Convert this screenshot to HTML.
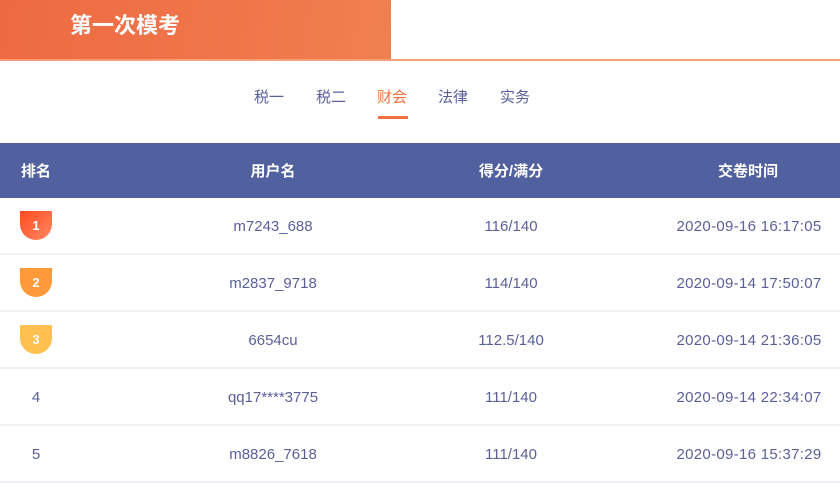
<!DOCTYPE html><html><head><meta charset="utf-8"><style>
*{margin:0;padding:0;box-sizing:border-box}
body{width:840px;height:482px;background:#fff;font-family:"Liberation Sans","Noto Sans CJK SC",sans-serif;position:relative;overflow:hidden}
.top{position:absolute;left:0;top:0;width:391px;height:60px;background:linear-gradient(100deg,#ee6a42,#f0764a 60%,#f08050)}
.line{position:absolute;left:0;top:59px;width:840px;height:2px;background:#f5a07a}
.title{position:absolute;left:70px;top:11px;color:#fff;font-size:22px;font-weight:bold;line-height:30px}
.tabs span{position:absolute;top:88px;font-size:15px;color:#5a5f9a;line-height:20px}
.ul{position:absolute;left:378px;top:116px;width:30px;height:3px;background:#f0703f}
.th{position:absolute;left:0;top:143px;width:840px;height:55px;background:#51609f;color:#fff;font-weight:bold;font-size:15px}
.c{position:absolute;text-align:center;transform:translateX(-50%);white-space:nowrap}
.row{position:absolute;left:0;width:840px;height:57px;border-bottom:2px solid #f1f1f3;color:#5a5f9a;font-size:15px}
.b{position:absolute;left:20px;top:13px;width:32px;height:29px;border-radius:0 0 16px 16px;color:#fff;font-size:13px;font-weight:bold;text-align:center;line-height:29px}
.w{letter-spacing:0.3px}
</style></head><body>
<div class="top"></div><div class="line"></div>
<div class="title">第一次模考</div>
<div class="tabs"><span style="left:254px">税一</span><span style="left:316px">税二</span><span style="left:377px;color:#f0703f">财会</span><span style="left:438px">法律</span><span style="left:500px">实务</span></div>
<div class="ul"></div>
<div class="th"><span class="c" style="left:36px;top:17px">排名</span><span class="c" style="left:273px;top:17px">用户名</span><span class="c" style="left:511px;top:17px">得分/满分</span><span class="c" style="left:748px;top:17px">交卷时间</span></div>
<div class="row" style="top:198px"><div class="b" style="background:linear-gradient(135deg,#ff4a22,#ff8a60)">1</div><span class="c" style="left:273px;top:20px">m7243_688</span><span class="c" style="left:511px;top:20px">116/140</span><span class="c w" style="left:749px;top:20px">2020-09-16 16:17:05</span></div>
<div class="row" style="top:255px"><div class="b" style="background:#ff9a3a">2</div><span class="c" style="left:273px;top:20px">m2837_9718</span><span class="c" style="left:511px;top:20px">114/140</span><span class="c w" style="left:749px;top:20px">2020-09-14 17:50:07</span></div>
<div class="row" style="top:312px"><div class="b" style="background:#ffc050">3</div><span class="c" style="left:273px;top:20px">6654cu</span><span class="c" style="left:511px;top:20px">112.5/140</span><span class="c w" style="left:749px;top:20px">2020-09-14 21:36:05</span></div>
<div class="row" style="top:369px"><span class="c" style="left:36px;top:20px">4</span><span class="c" style="left:273px;top:20px">qq17****3775</span><span class="c" style="left:511px;top:20px">111/140</span><span class="c w" style="left:749px;top:20px">2020-09-14 22:34:07</span></div>
<div class="row" style="top:426px"><span class="c" style="left:36px;top:20px">5</span><span class="c" style="left:273px;top:20px">m8826_7618</span><span class="c" style="left:511px;top:20px">111/140</span><span class="c w" style="left:749px;top:20px">2020-09-16 15:37:29</span></div>
</body></html>
